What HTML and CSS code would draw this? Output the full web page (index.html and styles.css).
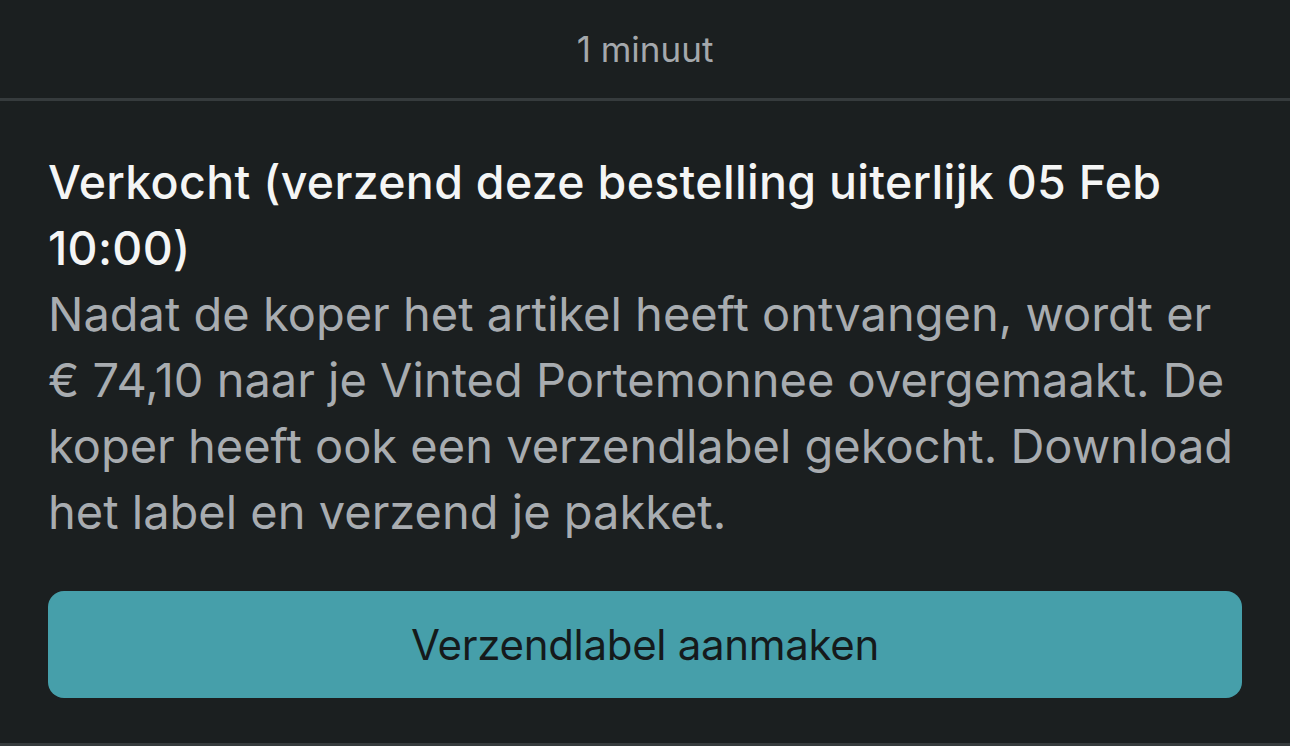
FILE: index.html
```html
<!DOCTYPE html>
<html lang="nl">
<head>
    <meta charset="UTF-8">
    <meta name="viewport" content="width=device-width, initial-scale=1.0">
    <title>Bericht</title>
    <link rel="stylesheet" href="styles.css">
</head>
<body>
    <div class="thread">
        <div class="timestamp">1 minuut</div>

        <div class="status-card">
            <h2 class="status-title">Verkocht (verzend deze bestelling uiterlijk 05 Feb 10:00)</h2>
            <p class="status-text">Nadat de koper het artikel heeft ontvangen, wordt er € 74,10 naar je Vinted Portemonnee overgemaakt. De koper heeft ook een verzendlabel gekocht. Download het label en verzend je pakket.</p>
            <button class="primary-button">Verzendlabel aanmaken</button>
        </div>
    </div>
</body>
</html>
```

FILE: styles.css
```css
* {
    box-sizing: border-box;
    margin: 0;
    padding: 0;
}

body {
    font-family: Inter, 'Noto Sans', sans-serif;
    background: #1b1f20;
    color: #f2f3f3;
    width: 1290px;
    height: 746px;
    overflow: hidden;
}

.thread {
    display: flex;
    flex-direction: column;
}

.timestamp {
    height: 101px;
    display: flex;
    justify-content: center;
    align-items: center;
    padding-bottom: 1px;
    font-size: 35px;
    color: #a4a8ac;
    border-bottom: 3px solid #363b3d;
}

.status-card {
    padding: 48px 48px 45px;
    border-bottom: 4px solid #363b3d;
}

.status-title {
    font-size: 46.5px;
    font-weight: 500;
    line-height: 66px;
    letter-spacing: 0.3px;
    color: #f4f5f5;
}

.status-text {
    font-size: 47px;
    font-weight: 400;
    line-height: 66px;
    color: #a8acb0;
}

.primary-button {
    display: block;
    width: 100%;
    height: 107px;
    margin-top: 46px;
    background: #469faa;
    color: #151a1b;
    border: none;
    border-radius: 16px;
    font-family: inherit;
    font-size: 42px;
    font-weight: 400;
    letter-spacing: -0.3px;
    cursor: pointer;
}
```
